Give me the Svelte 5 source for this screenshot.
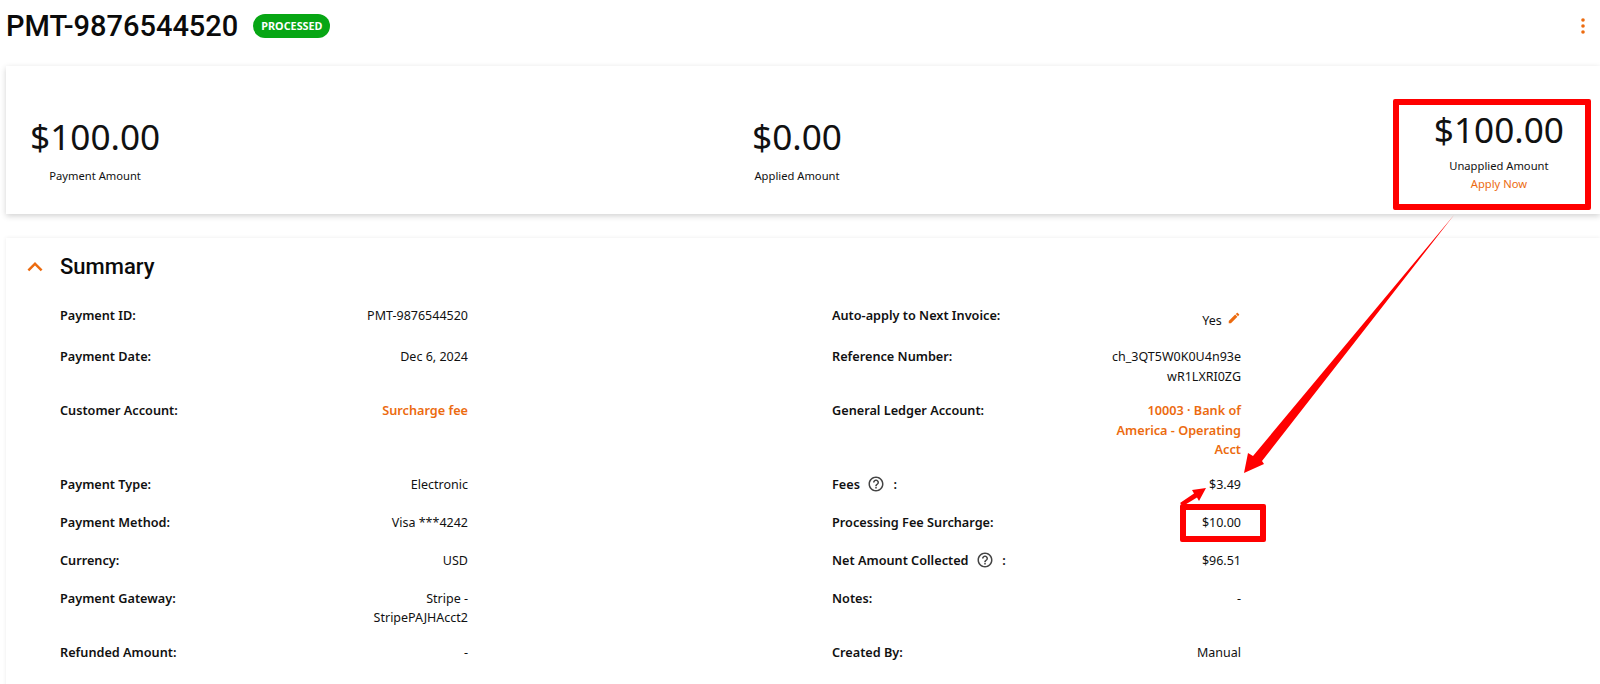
<script>
  const helpPath =
    "M11 18h2v-2h-2v2zm1-16C6.48 2 2 6.48 2 12s4.48 10 10 10 10-4.48 10-10S17.52 2 12 2zm0 18c-4.41 0-8-3.59-8-8s3.59-8 8-8 8 3.59 8 8-3.59 8-8 8zm0-14c-2.21 0-4 1.79-4 4h2c0-1.1.9-2 2-2s2 .9 2 2c0 2-3 1.75-3 5h2c0-2.25 3-2.5 3-5 0-2.21-1.79-4-4-4z";

  const rows = [
    { l: ["Payment ID:", "PMT-9876544520"], r: ["Auto-apply to Next Invoice:", "Yes"], edit: true },
    { l: ["Payment Date:", "Dec 6, 2024"], r: ["Reference Number:", "ch_3QT5W0K0U4n93ewR1LXRI0ZG"] },
    { l: ["Customer Account:", "Surcharge fee"], r: ["General Ledger Account:", "10003 · Bank of America - Operating Acct"], link: true },
    { l: ["Payment Type:", "Electronic"], r: ["Fees", "$3.49"], help: true },
    { l: ["Payment Method:", "Visa ***4242"], r: ["Processing Fee Surcharge:", "$10.00"] },
    { l: ["Currency:", "USD"], r: ["Net Amount Collected", "$96.51"], help: true },
    { l: ["Payment Gateway:", "Stripe - StripePAJHAcct2"], r: ["Notes:", "-"] },
    { l: ["Refunded Amount:", "-"], r: ["Created By:", "Manual"] }
  ];
</script>

<div class="page">
  <header class="top">
    <h1>PMT-9876544520</h1>
    <span class="badge">PROCESSED</span>
    <svg class="kebab" width="4" height="16" viewBox="0 0 4 16" fill="#ec6b0f">
      <circle cx="2" cy="2" r="1.8" />
      <circle cx="2" cy="8" r="1.8" />
      <circle cx="2" cy="14" r="1.8" />
    </svg>
  </header>

  <section class="stats">
    <div class="stat">
      <div class="amount">$100.00</div>
      <div class="caption">Payment Amount</div>
    </div>
    <div class="stat">
      <div class="amount">$0.00</div>
      <div class="caption">Applied Amount</div>
    </div>
    <div class="stat with-link">
      <div class="amount">$100.00</div>
      <div class="caption">Unapplied Amount</div>
      <a href="#apply">Apply Now</a>
    </div>
  </section>

  <section class="summary">
    <div class="summary-head">
      <svg width="30" height="30" viewBox="0 0 24 24" fill="#ec6b0f">
        <path d="M12 8l-6 6 1.41 1.41L12 10.83l4.59 4.58L18 14z" />
      </svg>
      <h2>Summary</h2>
    </div>

    <div class="details">
      {#each rows as row}
        <div class="label" class:first={row.edit}>{row.l[0]}</div>
        <div class="value" class:link={row.link}>{row.l[1]}</div>
        <div class="label second">
          {row.r[0]}
          {#if row.help}
            <svg class="help" width="18" height="18" viewBox="0 0 24 24" fill="#444">
              <path d={helpPath} />
            </svg>
            <span class="colon">:</span>
          {/if}
        </div>
        <div class="value" class:link={row.link} class:editable={row.edit}>
          {row.r[1]}
          {#if row.edit}
            <svg class="edit" width="14" height="14" viewBox="0 0 24 24" fill="#ec6b0f">
              <path d="M3 17.25V21h3.75L17.81 9.94l-3.75-3.75L3 17.25zM20.71 7.04c.39-.39.39-1.02 0-1.41l-2.34-2.34c-.39-.39-1.02-.39-1.41 0l-1.83 1.83 3.75 3.75 1.83-1.83z" />
            </svg>
          {/if}
        </div>
      {/each}
    </div>
  </section>

  <!-- review markup drawn on top of the screen -->
  <div class="mark mark-unapplied"></div>
  <div class="mark mark-surcharge"></div>
  <svg class="arrows" width="1600" height="684" viewBox="0 0 1600 684" fill="#f00">
    <path d="M1454 215 L1262 461 L1264 464 L1244 473 L1248 453 L1253 456 Z" />
    <path d="M1180 503 L1194 493.5 L1192 490 L1206 488 L1199 501 L1197 497.5 L1183 506 Z" />
  </svg>
</div>

<style>
  :global(body) {
    margin: 0;
    background: #fff;
  }

  .page {
    position: relative;
    height: 684px;
    overflow: hidden;
    font-family: "Noto Sans", sans-serif;
    color: #111;
  }

  .top {
    display: flex;
    align-items: center;
    height: 52px;
    padding: 0 15px 0 6px;
  }

  h1 {
    margin: 0;
    font: 500 29px/36px Roboto, sans-serif;
    color: #0b0b0b;
  }

  .badge {
    margin-left: 15px;
    padding: 0 8px;
    height: 24px;
    line-height: 24px;
    border-radius: 12px;
    background: #07a614;
    color: #fff;
    font-size: 10.8px;
    font-weight: 700;
  }

  .kebab {
    margin-left: auto;
  }

  .stats {
    display: flex;
    justify-content: space-between;
    align-items: center;
    box-sizing: border-box;
    height: 148px;
    margin: 14px 0 0 6px;
    padding: 17px 36px 0 24px;
    box-shadow: 0 2px 6px rgba(0, 0, 0, 0.18);
  }

  .stat {
    display: flex;
    flex-direction: column;
    align-items: center;
  }

  .amount {
    font-size: 35.2px;
    line-height: 48px;
  }

  .caption {
    margin-top: 7px;
    font-size: 11.2px;
    line-height: 18px;
  }

  .with-link .caption {
    margin-top: 4px;
  }

  .with-link a {
    font-size: 11.2px;
    line-height: 17px;
    color: #ec6b0f;
    text-decoration: none;
  }

  .summary {
    margin: 24px 0 0 6px;
    padding-bottom: 60px;
    box-shadow: 0 0 4px rgba(0, 0, 0, 0.08);
  }

  .summary-head {
    display: flex;
    align-items: center;
    gap: 10px;
    height: 30px;
    padding: 14px 0 0 14px;
  }

  h2 {
    margin: 0;
    font: 500 22px/30px Roboto, sans-serif;
    color: #0b0b0b;
  }

  .details {
    display: grid;
    grid-template-columns: 278px 130px 643px 130px;
    row-gap: 15px;
    padding: 24px 0 0 54px;
    font-size: 12.5px;
    line-height: 19.5px;
  }

  .label {
    min-height: 23px;
    font-size: 12.7px;
    font-weight: 600;
  }

  .label.first {
    min-height: 26px;
  }

  .label.second {
    padding-left: 364px;
  }

  .value {
    text-align: right;
    overflow-wrap: anywhere;
  }

  .editable {
    padding-top: 5px;
  }

  .link {
    font-size: 12.7px;
    color: #ec6b0f;
    font-weight: 600;
  }

  .help {
    vertical-align: -4px;
    margin-left: 4px;
  }

  .colon {
    margin-left: 5px;
  }

  .edit {
    margin-left: 2px;
    vertical-align: 0;
  }

  .mark {
    position: absolute;
    box-sizing: border-box;
    border: 6px solid #f00;
    border-radius: 2px;
  }

  .mark-unapplied {
    left: 1393px;
    top: 99px;
    width: 198px;
    height: 111px;
  }

  .mark-surcharge {
    left: 1180px;
    top: 504px;
    width: 86px;
    height: 38px;
  }

  .arrows {
    position: absolute;
    left: 0;
    top: 0;
    pointer-events: none;
  }
</style>
